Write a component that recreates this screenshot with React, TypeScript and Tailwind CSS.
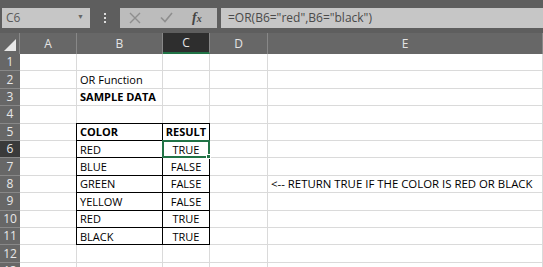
import React from 'react';

const cols = [
  { name: 'A', w: 57 },
  { name: 'B', w: 86 },
  { name: 'C', w: 47 },
  { name: 'D', w: 58 },
  { name: 'E', w: 275 },
];

type Cell = { text?: string; bold?: boolean; center?: boolean; box?: boolean; big?: boolean };

const rows: Record<number, Record<string, Cell>> = {
  2: { B: { text: 'OR Function' } },
  3: { B: { text: 'SAMPLE DATA', bold: true } },
  5: { B: { text: 'COLOR', bold: true, box: true }, C: { text: 'RESULT', bold: true, box: true, center: true } },
  6: { B: { text: 'RED', box: true }, C: { text: 'TRUE', box: true, center: true } },
  7: { B: { text: 'BLUE', box: true }, C: { text: 'FALSE', box: true, center: true } },
  8: { B: { text: 'GREEN', box: true }, C: { text: 'FALSE', box: true, center: true }, E: { text: '<-- RETURN TRUE IF THE COLOR IS RED OR BLACK', big: true } },
  9: { B: { text: 'YELLOW', box: true }, C: { text: 'FALSE', box: true, center: true } },
  10: { B: { text: 'RED', box: true }, C: { text: 'TRUE', box: true, center: true } },
  11: { B: { text: 'BLACK', box: true }, C: { text: 'TRUE', box: true, center: true } },
};

const font = { fontFamily: '"Open Sans", "Noto Sans", sans-serif' };

export default function App() {
  return (
    <div className="w-[543px] h-[267px] overflow-hidden bg-white" style={font}>
      {/* toolbar */}
      <div className="h-[33px] bg-[#5e5e5e] flex items-center pt-[2px] pl-[2px]">
        <div className="w-[88px] h-[20px] bg-[#c6c6c6] flex items-center justify-between px-[4px] text-[12px] text-[#5a5a5a]">
          <span>C6</span>
          <span className="text-[7px] text-[#666] pr-[2px]">▼</span>
        </div>
        <div className="w-[30px] flex flex-col items-center gap-[2px]">
          <div className="w-[2px] h-[2px] bg-[#ddd]" />
          <div className="w-[2px] h-[2px] bg-[#ddd]" />
          <div className="w-[2px] h-[2px] bg-[#ddd]" />
        </div>
        <div className="w-[97px] h-[20px] bg-[#bcbcbc] flex items-center">
          <svg width="12" height="12" viewBox="0 0 12 12" className="ml-[9px]">
            <path d="M1 1L11 11M11 1L1 11" stroke="#8e8e8e" strokeWidth="1.4" />
          </svg>
          <svg width="13" height="11" viewBox="0 0 13 11" className="ml-[19px]">
            <path d="M1 5.5L5 9.5L12 1" stroke="#8e8e8e" strokeWidth="1.6" fill="none" />
          </svg>
          <span className="ml-[19px] text-[14px] italic font-bold text-[#444]" style={{ fontFamily: '"Liberation Serif", serif' }}>
            f<span className="text-[10px]">x</span>
          </span>
        </div>
        <div className="ml-[4px] flex-1 h-[20px] bg-[#c6c6c6] flex items-center pl-[7px] text-[12px] text-[#4a4a4a]">
          =OR(B6="red",B6="black")
        </div>
      </div>

      {/* column headers */}
      <div className="flex h-[21px] bg-[#676767] text-[12px] text-[#e4e4e4]">
        <div className="w-[20px] relative border-r border-[#888]">
          <div className="absolute right-[3px] bottom-[3px] w-0 h-0 border-l-[12px] border-l-transparent border-b-[12px] border-b-[#e8e8e8]" />
        </div>
        {cols.map((c) => (
          <div
            key={c.name}
            className={`flex items-center justify-center border-r border-[#888] ${c.name === 'C' ? 'bg-[#2e2e2e] border-b-2 border-b-[#217346]' : ''}`}
            style={{ width: c.w }}
          >
            {c.name}
          </div>
        ))}
      </div>

      {/* rows */}
      {Array.from({ length: 13 }, (_, i) => i + 1).map((r) => (
        <div key={r} className="flex h-[17.4px]">
          <div
            className={`w-[20px] shrink-0 flex items-center justify-center text-[12px] text-[#e8e8e8] border-b border-[#888] ${r === 6 ? 'bg-[#3a3a3a]' : 'bg-[#676767]'}`}
          >
            {r}
          </div>
          {cols.map((c) => {
            const cell = rows[r]?.[c.name];
            const sel = r === 6 && c.name === 'C';
            return (
              <div
                key={c.name}
                className="relative shrink-0 border-r border-b border-[#dadada] text-[11px] text-black whitespace-nowrap"
                style={{ width: c.w }}
              >
                {cell?.box && (
                  <div className={`absolute -top-px right-[-1px] bottom-[-1px] border border-black ${c.name === 'C' ? 'left-0 border-l-0' : '-left-px'}`} />
                )}
                {sel && (
                  <div className="absolute -left-px -top-px right-[-1px] bottom-[-1px] border-2 border-[#217346] z-10">
                    <div className="absolute -right-[3px] -bottom-[3px] w-[5px] h-[5px] bg-[#217346] border border-white" />
                  </div>
                )}
                {cell?.text && (
                  <div
                    className={`absolute inset-0 flex items-center leading-none ${cell.center ? 'justify-center' : 'pl-[3px]'} ${cell.bold ? 'font-bold' : ''} ${cell.big ? 'text-[11.4px]' : ''}`}
                  >
                    {cell.text}
                  </div>
                )}
              </div>
            );
          })}
        </div>
      ))}
    </div>
  );
}
